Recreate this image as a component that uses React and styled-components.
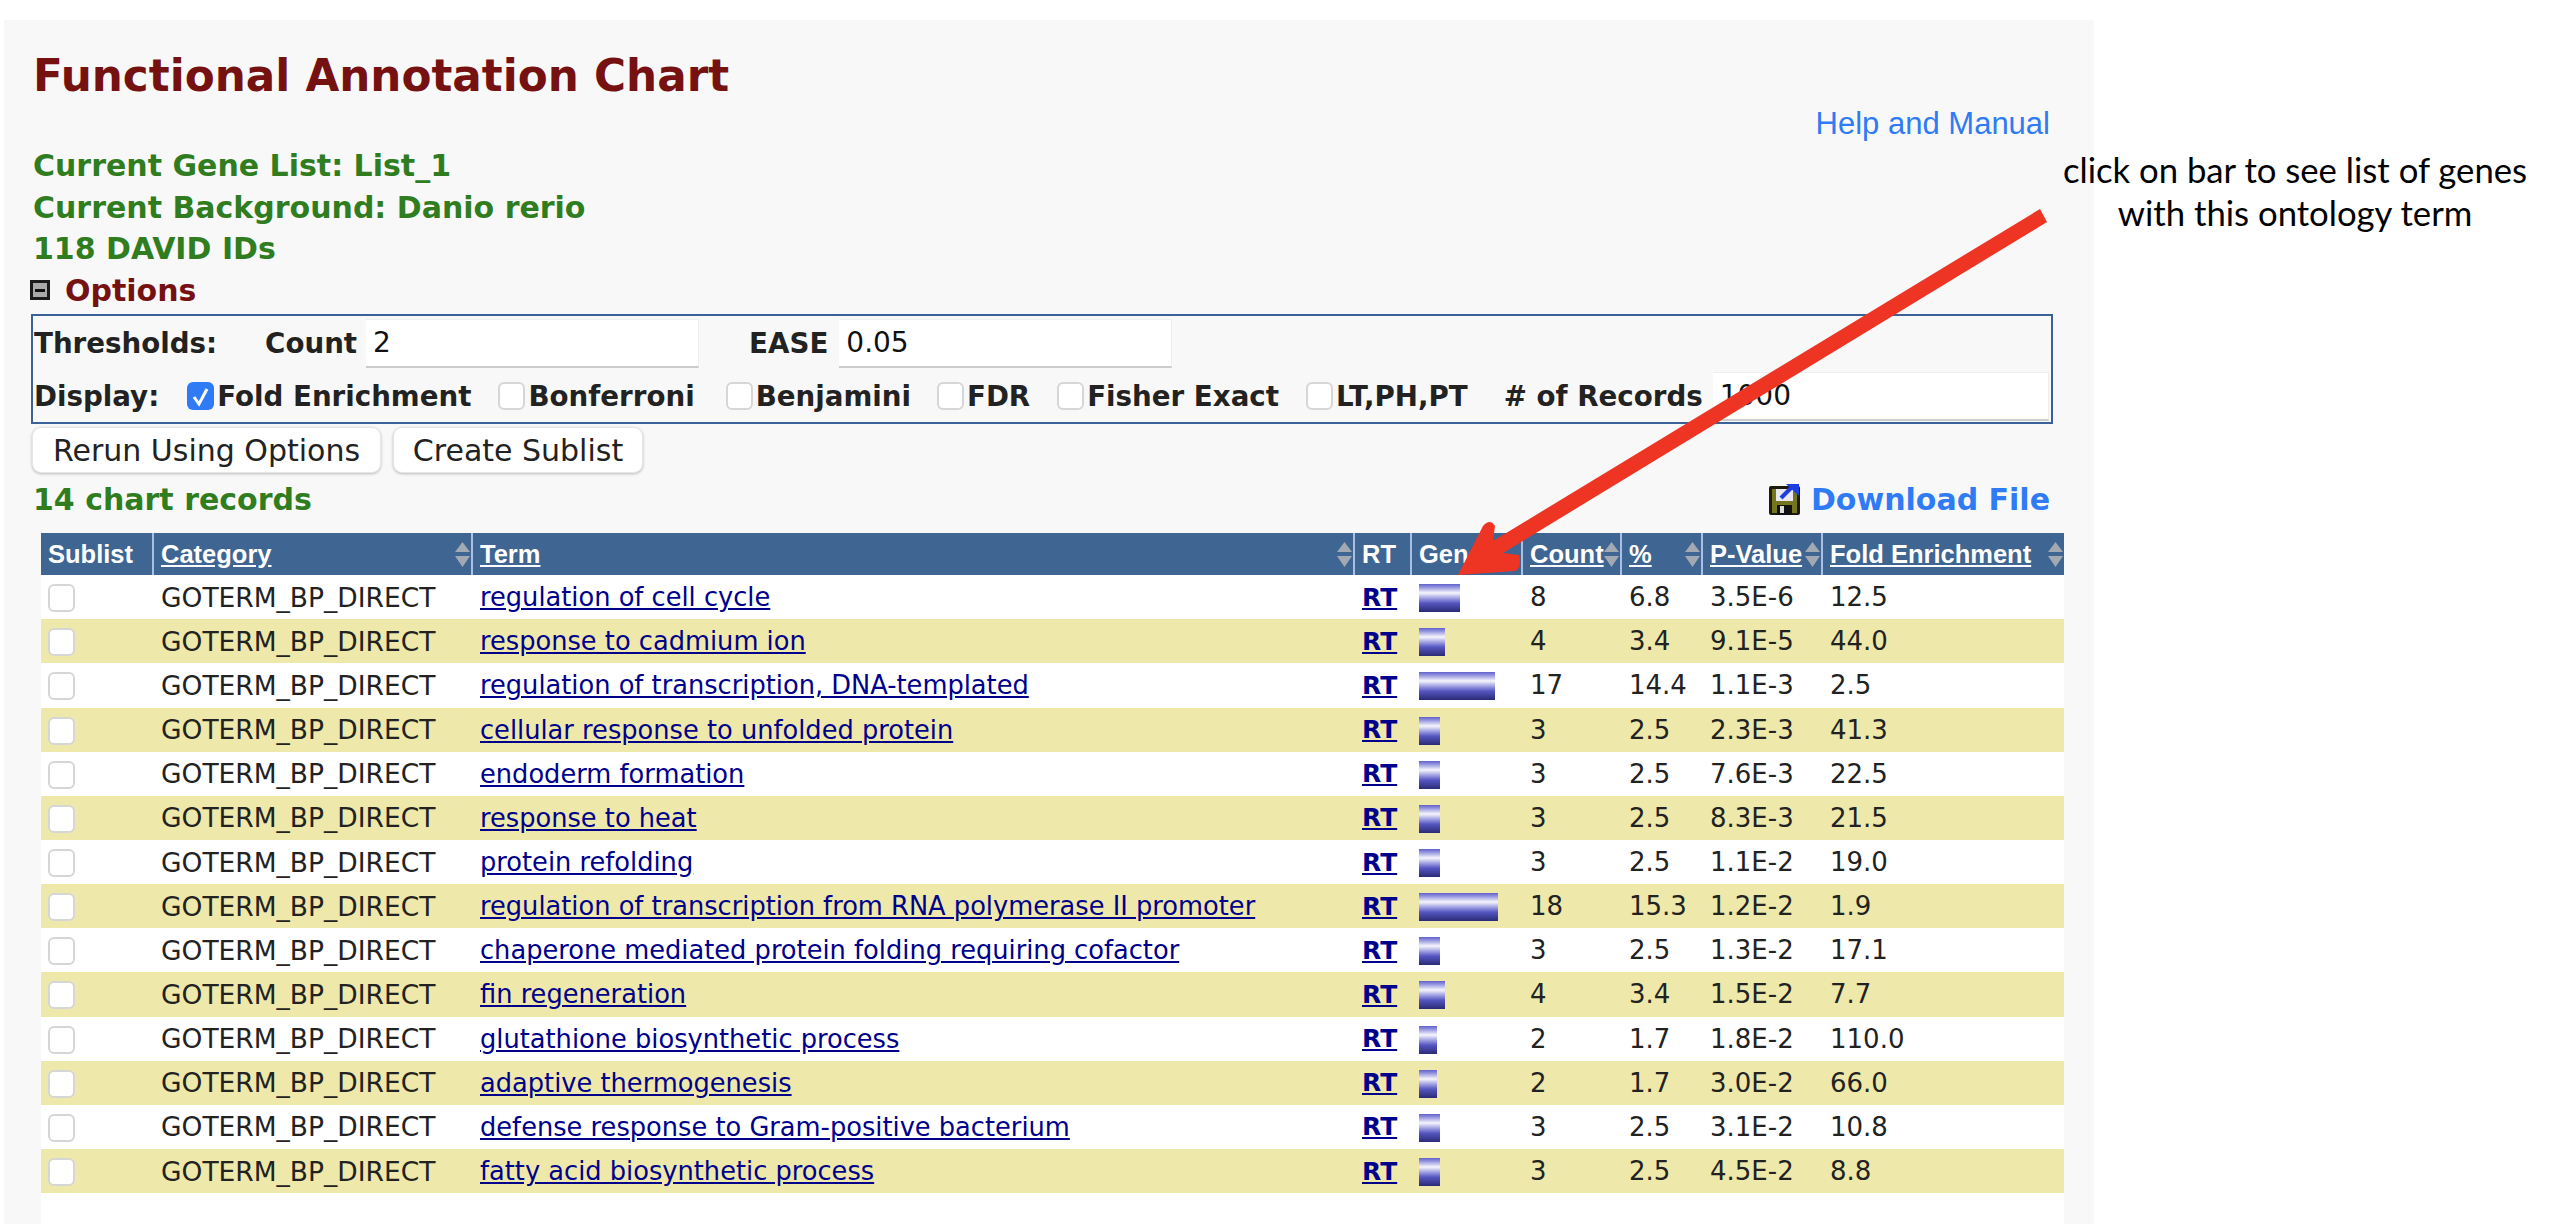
import React from "react";
import styled, { createGlobalStyle } from "styled-components";

const GlobalStyle = createGlobalStyle`
  html, body {
    margin: 0;
    padding: 0;
    background: #fff;
    font-family: "DejaVu Sans", Verdana, sans-serif;
  }
`;

const Page = styled.div`
  position: relative;
  width: 2558px;
  height: 1232px;
  padding: 20px 0 0 4px;
  box-sizing: border-box;
  overflow: hidden;
`;

const Panel = styled.div`
  width: 2090px;
  height: 1204px;
  background: #f8f8f8;
  display: flex;
  flex-direction: column;
`;

const Intro = styled.div`
  display: flex;
  justify-content: space-between;
  align-items: flex-start;
  padding: 0 44px 0 29px;
`;

const Title = styled.h1`
  margin: 30px 0 43px;
  font-size: 43.7px;
  line-height: 52px;
  font-weight: 700;
  color: #761111;
`;

const HelpLink = styled.a`
  margin-top: 86px;
  font-family: "Liberation Sans", Arial, sans-serif;
  font-size: 31px;
  line-height: 36px;
  color: #2f7bf5;
`;

const GreenLine = styled.div`
  font-size: 30px;
  font-weight: 700;
  line-height: 41.7px;
  color: #2f7d1f;
`;

const OptionsToggle = styled.div`
  display: flex;
  align-items: center;
  gap: 15px;
  margin: 0 0 0 26px;
  height: 44px;
  padding-bottom: 4px;
  box-sizing: border-box;
  font-size: 30px;
  font-weight: 700;
  color: #761111;
`;

const MinusBox = styled.span`
  width: 20px;
  height: 20px;
  box-sizing: border-box;
  border: 3px solid #1c1c1c;
  background: #aaa;
  display: flex;
  align-items: center;
  justify-content: center;

  &::after {
    content: "";
    width: 10px;
    height: 3px;
    background: #111;
  }
`;

const OptionsBox = styled.div`
  margin: 0 0 0 27px;
  width: 2022px;
  height: 110px;
  box-sizing: border-box;
  border: 2px solid #3a6298;
  display: flex;
  flex-direction: column;
  color: #222;
  font-size: 27.7px;
  font-weight: 700;
`;

const OptionRow = styled.div`
  display: flex;
  align-items: center;
  height: ${(p) => p.$height}px;
  padding-left: 1px;
`;

const Label = styled.span`
  margin-left: ${(p) => p.$left || 0}px;
  white-space: nowrap;
`;

const TextInput = styled.input`
  width: ${(p) => p.$width}px;
  height: 49px;
  box-sizing: border-box;
  margin-left: ${(p) => p.$left || 0}px;
  padding: 0 7px;
  border: 0;
  border-top: 1px solid #eee;
  border-right: 1px solid #eee;
  border-bottom: 2px solid #ccc;
  outline: none;
  background: #fff;
  color: #111;
  font-family: "DejaVu Sans", Verdana, sans-serif;
  font-size: 28px;
`;

const CheckItem = styled.label`
  display: flex;
  align-items: center;
  gap: 3px;
  margin-left: ${(p) => p.$left}px;
  white-space: nowrap;
`;

const CheckBox = styled.span`
  width: 27px;
  height: 28px;
  flex: none;
  box-sizing: border-box;
  border-radius: 6px;
  border: ${(p) => (p.$checked ? "0" : "2px solid #d6d6d6")};
  background: ${(p) => (p.$checked ? "#2f7bf5" : "#fff")};
  display: flex;
  align-items: center;
  justify-content: center;
`;

const Buttons = styled.div`
  display: flex;
  gap: 12px;
  margin: 3px 0 0 28px;
`;

const Button = styled.button`
  height: 46px;
  width: ${(p) => p.$width}px;
  padding: 0;
  background: #fff;
  border: 1px solid #e6e6e6;
  border-radius: 9px;
  box-shadow: 0 1px 3px rgba(0, 0, 0, 0.25);
  color: #222;
  font-family: "DejaVu Sans", Verdana, sans-serif;
  font-size: 30px;
`;

const RecordsRow = styled.div`
  display: flex;
  justify-content: space-between;
  align-items: center;
  height: 46px;
  margin-top: 3px;
  padding: 0 44px 0 29px;
`;

const RecordsText = styled.div`
  font-size: 30px;
  font-weight: 700;
  color: #2f7d1f;
`;

const DownloadLink = styled.a`
  display: flex;
  align-items: center;
  gap: 11px;
  font-size: 30px;
  font-weight: 700;
  color: #2f7bf5;
`;

const TableArea = styled.div`
  flex: 1;
  margin: 11px 30px 0 37px;
  background: #fff;
`;

const Table = styled.table`
  width: 2023px;
  table-layout: fixed;
  border-collapse: collapse;
  border-spacing: 0;
`;

const HeadRow = styled.tr`
  height: 42px;
  background: #3f6592;
`;

const HeadCell = styled.th`
  position: relative;
  padding: 0 0 0 7px;
  box-sizing: border-box;
  text-align: left;
  border-left: ${(p) => (p.$first ? "0" : "2px solid #a9bfe6")};
  color: #fff;
  font-family: "Liberation Sans", Arial, sans-serif;
  font-size: 25.5px;
  font-weight: 700;
  white-space: nowrap;
  overflow: hidden;

  a {
    color: #fff;
    text-decoration: underline;
  }
`;

const SortIcon = styled.svg`
  position: absolute;
  right: 0;
  top: 9px;
  width: 17px;
  height: 25px;
`;

const BodyRow = styled.tr`
  height: 44.15px;
  background: ${(p) => (p.$alt ? "#eee8aa" : "#fff")};
`;

const Cell = styled.td`
  padding: 0 0 0 ${(p) => p.$pad ?? 8}px;
  box-sizing: border-box;
  color: #222;
  font-size: ${(p) => p.$size || 26}px;
  white-space: nowrap;
  overflow: hidden;
`;

const TermLink = styled.a`
  color: #00008b;
  text-decoration: underline;
`;

const RtLink = styled.a`
  color: #00008b;
  font-weight: 700;
  text-decoration: underline;
`;

const RowCheck = styled(CheckBox)`
  margin-top: 2px;
  border-width: 2px;
`;

const Bar = styled.div`
  height: 28px;
  margin-top: 2px;
  background: linear-gradient(
    to bottom,
    #6060cc 0%,
    #9696e0 12%,
    #f6f6fd 32%,
    #9a9ae0 52%,
    #5656c2 68%,
    #2a2a76 100%
  );
`;

const Note = styled.div`
  position: absolute;
  left: 2034px;
  top: 149px;
  width: 522px;
  text-align: center;
  color: #000;
  font-family: Lato, "Open Sans", sans-serif;
  font-size: 34.7px;
  line-height: 42.5px;
`;

const ArrowOverlay = styled.svg`
  position: absolute;
  left: 0;
  top: 0;
  width: 2558px;
  height: 1232px;
  pointer-events: none;
`;

const rows = [
  ["regulation of cell cycle", 8, "6.8", "3.5E-6", "12.5", 41],
  ["response to cadmium ion", 4, "3.4", "9.1E-5", "44.0", 26],
  ["regulation of transcription, DNA-templated", 17, "14.4", "1.1E-3", "2.5", 76],
  ["cellular response to unfolded protein", 3, "2.5", "2.3E-3", "41.3", 21],
  ["endoderm formation", 3, "2.5", "7.6E-3", "22.5", 21],
  ["response to heat", 3, "2.5", "8.3E-3", "21.5", 21],
  ["protein refolding", 3, "2.5", "1.1E-2", "19.0", 21],
  ["regulation of transcription from RNA polymerase II promoter", 18, "15.3", "1.2E-2", "1.9", 79],
  ["chaperone mediated protein folding requiring cofactor", 3, "2.5", "1.3E-2", "17.1", 21],
  ["fin regeneration", 4, "3.4", "1.5E-2", "7.7", 26],
  ["glutathione biosynthetic process", 2, "1.7", "1.8E-2", "110.0", 18],
  ["adaptive thermogenesis", 2, "1.7", "3.0E-2", "66.0", 18],
  ["defense response to Gram-positive bacterium", 3, "2.5", "3.1E-2", "10.8", 21],
  ["fatty acid biosynthetic process", 3, "2.5", "4.5E-2", "8.8", 21],
];

const columns = [
  { name: "Sublist", width: 112 },
  { name: "Category", width: 319, link: true, sort: true },
  { name: "Term", width: 882, link: true, sort: true },
  { name: "RT", width: 57 },
  { name: "Gene", width: 111 },
  { name: "Count", width: 99, link: true, sort: true },
  { name: "%", width: 81, link: true, sort: true },
  { name: "P-Value", width: 120, link: true, sort: true },
  { name: "Fold Enrichment", width: 242, link: true, sort: true },
];

const options = [
  { label: "Fold Enrichment", left: 28, checked: true },
  { label: "Bonferroni", left: 27 },
  { label: "Benjamini", left: 31 },
  { label: "FDR", left: 26 },
  { label: "Fisher Exact", left: 27 },
  { label: "LT,PH,PT", left: 27 },
];

function SortArrows() {
  return (
    <SortIcon viewBox="0 0 17 25">
      <path d="M8.5 0 L16 10 H1 Z M1 14 H16 L8.5 25 Z" fill="#a3a9b2" />
    </SortIcon>
  );
}

function FloppyIcon() {
  return (
    <svg width="31" height="32" viewBox="0 0 31 32">
      <rect x="0" y="3" width="31" height="29" rx="2" fill="#1b1b10" />
      <rect x="3" y="6" width="25" height="24" fill="#75751f" />
      <rect x="7" y="6" width="17" height="12" fill="#e8e8ee" />
      <rect x="8" y="22" width="15" height="10" fill="#111" />
      <rect x="11" y="23" width="4" height="7" fill="#ddd" />
      <path d="M12 15 L23 4" stroke="#1f3ee0" strokeWidth="4" />
      <path d="M17 1 H30 V13 Z" fill="#1f3ee0" />
    </svg>
  );
}

export default function App() {
  return (
    <Page>
      <GlobalStyle />
      <Panel>
        <Intro>
          <div>
            <Title>Functional Annotation Chart</Title>
            <GreenLine>Current Gene List: List_1</GreenLine>
            <GreenLine>Current Background: Danio rerio</GreenLine>
            <GreenLine>118 DAVID IDs</GreenLine>
          </div>
          <HelpLink>Help and Manual</HelpLink>
        </Intro>
        <OptionsToggle>
          <MinusBox />
          Options
        </OptionsToggle>
        <OptionsBox>
          <OptionRow $height={54}>
            <Label>Thresholds:</Label>
            <Label $left={48}>Count</Label>
            <TextInput $width={333} $left={9} defaultValue="2" />
            <Label $left={50}>EASE</Label>
            <TextInput $width={333} $left={11} defaultValue="0.05" />
          </OptionRow>
          <OptionRow $height={52}>
            <Label>Display:</Label>
            {options.map((o) => (
              <CheckItem key={o.label} $left={o.left}>
                <CheckBox $checked={o.checked}>
                  {o.checked && (
                    <svg width="19" height="21" viewBox="0 0 19 21">
                      <path d="M3 11 L8 18 L16 3" fill="none" stroke="#fff" strokeWidth="3" />
                    </svg>
                  )}
                </CheckBox>
                {o.label}
              </CheckItem>
            ))}
            <Label $left={36}># of Records</Label>
            <TextInput $width={336} $left={10} defaultValue="1000" />
          </OptionRow>
        </OptionsBox>
        <Buttons>
          <Button $width={349}>Rerun Using Options</Button>
          <Button $width={250}>Create Sublist</Button>
        </Buttons>
        <RecordsRow>
          <RecordsText>14 chart records</RecordsText>
          <DownloadLink>
            <FloppyIcon />
            Download File
          </DownloadLink>
        </RecordsRow>
        <TableArea>
          <Table>
            <colgroup>
              {columns.map((c) => (
                <col key={c.name} width={c.width} />
              ))}
            </colgroup>
            <thead>
              <HeadRow>
                {columns.map((c, i) => (
                  <HeadCell key={c.name} $first={i === 0}>
                    {c.link ? <a>{c.name}</a> : c.name}
                    {c.sort && <SortArrows />}
                  </HeadCell>
                ))}
              </HeadRow>
            </thead>
            <tbody>
              {rows.map((r, i) => (
                <BodyRow key={r[0]} $alt={i % 2 === 1}>
                  <Cell $pad={7}>
                    <RowCheck />
                  </Cell>
                  <Cell $size={26.5}>GOTERM_BP_DIRECT</Cell>
                  <Cell $size={25.7}>
                    <TermLink>{r[0]}</TermLink>
                  </Cell>
                  <Cell $size={25}>
                    <RtLink>RT</RtLink>
                  </Cell>
                  <Cell>
                    <Bar style={{ width: r[5] }} />
                  </Cell>
                  <Cell>{r[1]}</Cell>
                  <Cell>{r[2]}</Cell>
                  <Cell>{r[3]}</Cell>
                  <Cell>{r[4]}</Cell>
                </BodyRow>
              ))}
            </tbody>
          </Table>
        </TableArea>
      </Panel>
      <Note>
        click on bar to see list of genes
        <br />
        with this ontology term
      </Note>
      <ArrowOverlay viewBox="0 0 2558 1232">
        <path
          d="M2040 209 L2047 222 L1503 553 L1519 555 Q1522 568 1515 571 L1458 575 L1483 526 Q1490 518 1495 526 L1493 541 Z"
          fill="#ee3524"
        />
      </ArrowOverlay>
    </Page>
  );
}
